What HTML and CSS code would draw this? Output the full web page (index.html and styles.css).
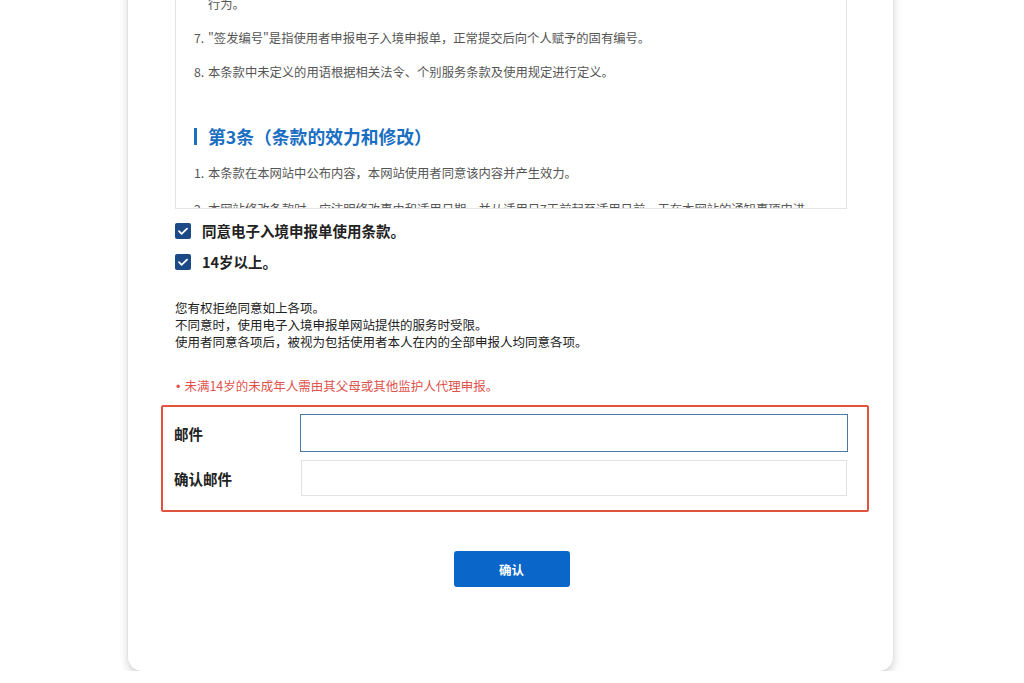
FILE: index.html
```html
<!DOCTYPE html>
<html lang="zh-CN">
<head>
<meta charset="utf-8">
<title>电子入境申报单</title>
<link rel="stylesheet" href="styles.css">
</head>
<body>
<div class="page">
  <div class="card">
    <div class="terms">
      <div class="terms-inner">
        <p class="item"><span class="num">6.</span>"电子入境申报"是指入境者通过本网站在线填写并提交入境申报单的<br>行为。</p>
        <p class="item"><span class="num">7.</span>"签发编号"是指使用者申报电子入境申报单，正常提交后向个人赋予的固有编号。</p>
        <p class="item"><span class="num">8.</span>本条款中未定义的用语根据相关法令、个别服务条款及使用规定进行定义。</p>
        <h3 class="article">第3条（条款的效力和修改）</h3>
        <p class="item wide"><span class="num">1.</span>本条款在本网站中公布内容，本网站使用者同意该内容并产生效力。</p>
        <p class="item"><span class="num">2.</span>本网站修改条款时，应注明修改事由和适用日期，并从适用日7天前起至适用日前一天在本网站的通知事项中进</p>
      </div>
    </div>

    <label class="check">
      <span class="box"><svg viewBox="0 0 16 16" width="16" height="16"><path d="M4 8.2l2.6 2.6L12 5.6" fill="none" stroke="#fff" stroke-width="1.8" stroke-linecap="round" stroke-linejoin="round"/></svg></span>
      <span class="check-text">同意电子入境申报单使用条款。</span>
    </label>
    <label class="check">
      <span class="box"><svg viewBox="0 0 16 16" width="16" height="16"><path d="M4 8.2l2.6 2.6L12 5.6" fill="none" stroke="#fff" stroke-width="1.8" stroke-linecap="round" stroke-linejoin="round"/></svg></span>
      <span class="check-text">14岁以上。</span>
    </label>

    <div class="notice">
      <p>您有权拒绝同意如上各项。</p>
      <p>不同意时，使用电子入境申报单网站提供的服务时受限。</p>
      <p>使用者同意各项后，被视为包括使用者本人在内的全部申报人均同意各项。</p>
    </div>

    <p class="warn"><span class="dot">•</span>未满14岁的未成年人需由其父母或其他监护人代理申报。</p>

    <div class="mail-box">
      <div class="field">
        <span class="label">邮件</span>
        <div class="input focused"></div>
      </div>
      <div class="field">
        <span class="label">确认邮件</span>
        <div class="input second"></div>
      </div>
    </div>

    <div class="actions">
      <button class="btn">确认</button>
    </div>
  </div>
</div>
</body>
</html>
```

FILE: styles.css
```css
* { box-sizing: border-box; }
html, body {
  margin: 0;
  padding: 0;
  background: #ffffff;
  font-family: "Noto Sans CJK SC", "Noto Sans", sans-serif;
}
html { overflow: hidden; }
.page {
  display: flow-root;
  width: 1024px;
  padding-left: 128px;
}
.card {
  width: 765px;
  margin-top: -60px;
  padding: 20px 46px 84px 47px;
  background: #fff;
  border-radius: 14px;
  box-shadow: 0 4px 10px rgba(0,0,0,0.18), 0 0 3px rgba(0,0,0,0.08);
}
.terms {
  height: 249px;
  overflow: hidden;
  border: 1px solid #e4e4e4;
  border-top: none;
}
.terms-inner {
  margin-top: 14px;
  padding: 0 20px 0 18px;
}
.item {
  margin: 0 0 14px;
  font-size: 12.3px;
  line-height: 20px;
  color: #555;
  padding-left: 14px;
  white-space: nowrap;
}
.item.wide { margin-bottom: 16px; }
.num {
  display: inline-block;
  width: 14px;
  margin-left: -14px;
}
.article {
  margin: 42px 0 15px;
  display: flex;
  align-items: center;
  gap: 11px;
  font-size: 17.8px;
  line-height: 24px;
  font-weight: 700;
  color: #1a6fc2;
}
.article::before {
  content: "";
  width: 3px;
  height: 17px;
  background: #1a6fc2;
}
.check {
  display: flex;
  align-items: center;
  gap: 11px;
  height: 20px;
  margin-top: 11px;
}
.check:first-of-type { margin-top: 12px; }
.box {
  width: 16px;
  height: 16px;
  border-radius: 2px;
  background: #1b4a86;
  display: flex;
  align-items: center;
  justify-content: center;
}
.check-text {
  font-size: 14.5px;
  line-height: 20px;
  font-weight: 700;
  color: #222;
}
.notice {
  margin-top: 27px;
}
.notice p {
  margin: 0;
  font-size: 12.5px;
  line-height: 17px;
  color: #222;
}
.warn {
  margin: 27px 0 0;
  font-size: 12.5px;
  line-height: 17px;
  color: #e0534d;
}
.dot {
  font-family: "Liberation Sans", sans-serif;
  margin-right: 4px;
  margin-left: 1px;
}
.mail-box {
  margin: 9px -22px 0 -14px;
  border: 2.5px solid #e2533f;
  border-radius: 2px;
  padding: 7px 19px 14px 11px;
}
.field {
  display: flex;
  align-items: center;
}
.field + .field { margin-top: 8px; }
.label {
  width: 126px;
  font-size: 14.5px;
  font-weight: 700;
  color: #222;
}
.input {
  flex: 1;
  background: #fff;
}
.input.focused {
  height: 38px;
  border: 1.5px solid #4a79a8;
}
.input.second {
  height: 36px;
  border: 1px solid #e2e2e2;
  margin-left: 1px;
  margin-right: 1px;
}
.actions {
  display: flex;
  justify-content: center;
  margin-top: 39px;
}
.btn {
  width: 116px;
  height: 36px;
  border: none;
  border-radius: 3px;
  background: #0b66c9;
  color: #fff;
  font-family: "Noto Sans CJK SC", sans-serif;
  font-size: 12.5px;
  font-weight: 700;
  margin-left: 1px;
}
```
